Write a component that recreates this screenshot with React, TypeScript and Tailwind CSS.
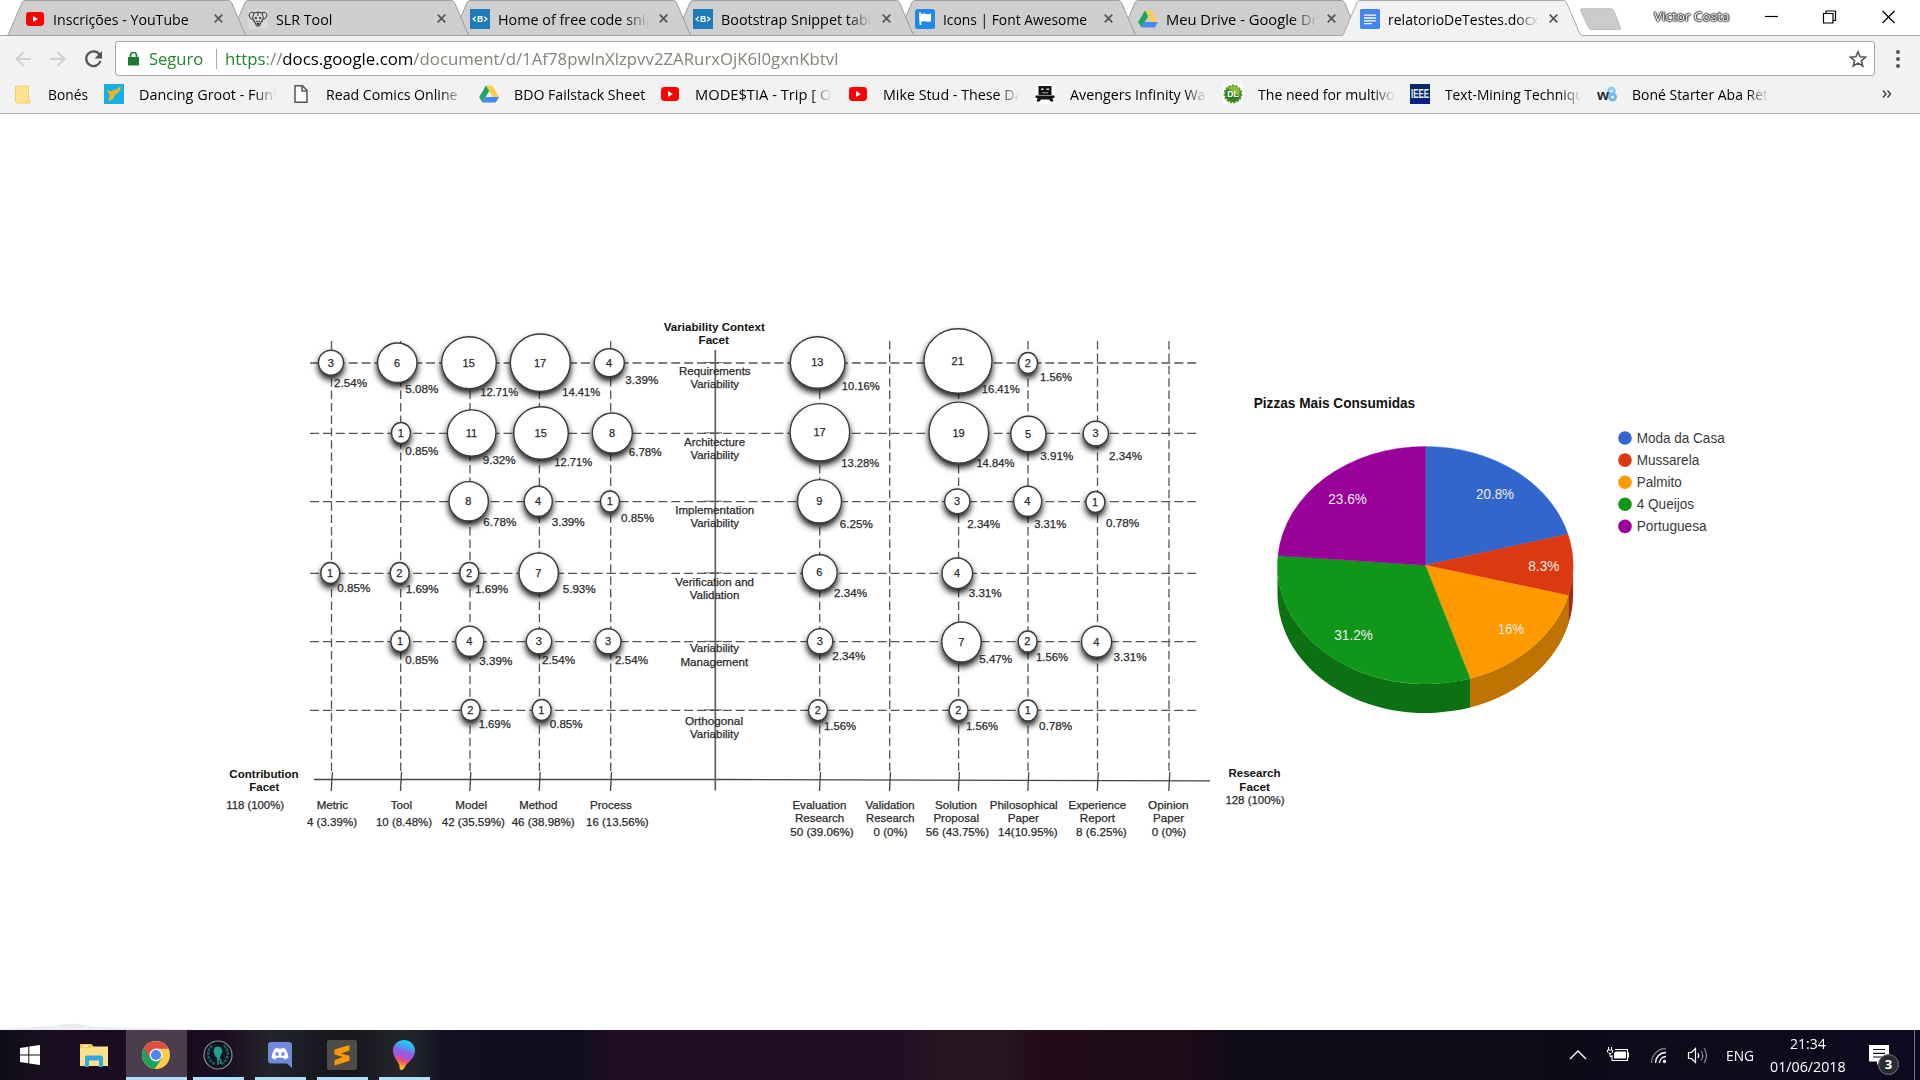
import { useLayoutEffect, useRef, useState, type ReactNode } from "react";

/* Text squeezed horizontally so that it takes exactly `w` pixels. */
function Fit({ w, children, className = "" }: { w: number; children: ReactNode; className?: string }) {
  const ref = useRef<HTMLSpanElement>(null);
  const [scale, setScale] = useState(1);
  useLayoutEffect(() => {
    if (ref.current) setScale(w / ref.current.offsetWidth);
  }, [w]);
  return (
    <span className={`block shrink-0 ${className}`} style={{ width: w }}>
      <span ref={ref} className="inline-block origin-left whitespace-nowrap" style={{ transform: `scaleX(${scale})` }}>
        {children}
      </span>
    </span>
  );
}

/* ---------- small icons ---------- */

const YouTube = () => (
  <svg viewBox="0 0 20 20" className="size-5">
    <rect x="1" y="3" width="18" height="14" rx="3.4" fill="#f00" />
    <path d="M8 7v6l5-3z" fill="#fff" />
  </svg>
);

const Panda = () => (
  <svg viewBox="0 0 20 20" className="size-5" fill="none" stroke="#333" strokeWidth="1">
    <rect width="20" height="20" fill="#d8d8d8" stroke="none" />
    <path d="M6 4 10 3l4 1 1.500 5-2.500 4-1.500 4h-3L7 13 4.500 9z" />
    <path d="M6 4C3 2 .8 4 1.200 7l2 3 1.500.5M14 4c3-2 5.200 0 4.800 3l-2 3-1.500.5" />
    <path d="M10 3v4M7 13 5 12M13 13l2-1M8 12l2 1 2-1" />
    <path d="M8.800 14.500h2.400L10 16zM6.800 9l1.600-.6-.3 1.600zM13.200 9l-1.600-.6.3 1.600z" fill="#222" />
  </svg>
);

const Bootsnipp = () => (
  <svg viewBox="0 0 20 20" className="size-5">
    <rect width="20" height="20" fill="#1f7ab8" />
    <path d="M5.800 7.800 3 10l2.800 2.200M14.200 7.800 17 10l-2.800 2.200" stroke="#fff" strokeWidth="1.200" fill="none" />
    <text x="10" y="13" textAnchor="middle" fontSize="8.500" fontWeight="700" fill="#fff" fontFamily="Liberation Sans, sans-serif">B</text>
  </svg>
);

const FontAwesome = () => (
  <svg viewBox="0 0 20 20" className="size-5">
    <rect width="20" height="20" rx="2.500" fill="#228ae6" />
    <path d="M4 4.300a1.100 1.100 0 0 1 2.200 0V5c2-.9 3.800-.6 5.300 0 1.600.6 2.800.4 4.500-.4v7.600c-1.700.9-3.100 1-4.800.4-1.700-.6-3.200-.7-5 .1V16H4.600z" fill="#fff" />
  </svg>
);

const Drive = () => (
  <svg viewBox="0 0 20 20" className="size-5">
    <path d="M7 1.500h6.200L20 13h-6.300z" fill="#ffcf4a" />
    <path d="M7 1.500 10.200 7 3.500 18.500.2 13z" fill="#1fa463" />
    <path d="M3.500 18.500 6.800 13H20l-3.200 5.500z" fill="#4688f4" />
  </svg>
);

const Docs = () => (
  <svg viewBox="0 0 20 20" className="size-5">
    <rect width="20" height="20" rx="1.500" fill="#4285f4" />
    <path d="M4 6.200h12M4 9h12M4 11.800h12M4 14.600h8" stroke="#fff" strokeWidth="1.300" />
  </svg>
);

const Folder = () => (
  <svg viewBox="0 0 20 20" className="size-5">
    <path d="M2.500 2h13v13l1.500 1.500V19H4l-1.500-1z" fill="#ffe48f" stroke="#f1c65a" strokeWidth=".8" />
    <path d="M14 19v-3.500l1.500-.5 1.500 1.500V19z" fill="#fbd66f" />
  </svg>
);

const Groot = () => (
  <svg viewBox="0 0 20 20" className="size-5">
    <rect width="20" height="20" fill="#19aee8" />
    <path d="M3 6l4 1.500L9.500 6l3.500-.5 2.500-3 1.500 1-1.500 3.500-2.500 2.500-2.500 2-1.500 3.500-3.500 2L4.500 15.500 6 12z" fill="#f3b51f" />
  </svg>
);

const Page = () => (
  <svg viewBox="0 0 20 20" className="size-5">
    <path d="M4 1.800h7.500L16 6.500v11.700H4z" fill="#fff" stroke="#555" strokeWidth="1.500" />
    <path d="M11 2v5h5" fill="none" stroke="#555" strokeWidth="1.500" />
  </svg>
);

const Train = () => (
  <svg viewBox="0 0 20 20" className="size-5">
    <rect width="20" height="20" fill="#fff" />
    <path d="M3.500 2h13v9h-13zM.5 11.500h19v2.500h-2L18.500 17.500h-3L14 15.500H6l-1.500 2h-3L2.500 14h-2z" fill="#151515" />
    <path d="M6 4.500h2.500V6H6zM11.500 4.500H14V6h-2.500zM7 8.500h6v.8H7z" fill="#ddd" />
  </svg>
);

const Badge = () => (
  <svg viewBox="0 0 20 20" className="size-5">
    <rect width="20" height="20" fill="#fff" />
    <circle cx="10" cy="10" r="8.200" fill="#2f7d2a" stroke="#4f8f22" strokeWidth="2.400" strokeDasharray="2.200 1.200" />
    <path d="M4.500 4.500a8 8 0 0 1 12 0v8z" fill="#8dbb35" />
    <text x="10" y="13" textAnchor="middle" fontSize="8.500" fontWeight="700" fill="#fff" fontFamily="Liberation Sans, sans-serif">DL</text>
  </svg>
);

const Ieee = () => (
  <svg viewBox="0 0 20 20" className="size-5">
    <rect width="20" height="20" fill="#0a2b62" />
    <rect y="15" width="20" height="5" fill="#0b1c8e" />
    <text x="1" y="14" textLength="18" lengthAdjust="spacingAndGlyphs" fontSize="12.500" fontWeight="700" fill="#e8eef8" fontFamily="Liberation Sans, sans-serif">IEEE</text>
  </svg>
);

const W8 = () => (
  <svg viewBox="0 0 20 20" className="size-5">
    <circle cx="14.500" cy="7" r="2.800" fill="none" stroke="#8cc8f2" strokeWidth="3" />
    <circle cx="15.500" cy="13" r="3" fill="none" stroke="#70b7ef" strokeWidth="3" />
    <text x="0" y="16" fontSize="14.500" fontWeight="700" fill="#2b2b2b" fontFamily="Liberation Sans, sans-serif" textLength="12" lengthAdjust="spacingAndGlyphs">w</text>
  </svg>
);

/* ---------- tab strip ---------- */

type TabData = { icon: ReactNode; label: string; w: number; z: string; active?: boolean; fade?: boolean };

const tabs: TabData[] = [
  { icon: <YouTube />, label: "Inscrições - YouTube", w: 136, z: "z-[6]" },
  { icon: <Panda />, label: "SLR Tool", w: 56, z: "z-[5]" },
  { icon: <Bootsnipp />, label: "Home of free code snip", w: 156, z: "z-[4]", fade: true },
  { icon: <Bootsnipp />, label: "Bootstrap Snippet table", w: 158, z: "z-[3]", fade: true },
  { icon: <FontAwesome />, label: "Icons | Font Awesome", w: 144, z: "z-[2]" },
  { icon: <Drive />, label: "Meu Drive - Google Dri", w: 155, z: "z-[1]", fade: true },
  { icon: <Docs />, label: "relatorioDeTestes.docx", w: 150.5, z: "z-[7]", active: true, fade: true },
];

const fadeMask = "[mask-image:linear-gradient(to_right,#000_84%,transparent)]";

function Tab({ icon, label, w, z, active, fade }: TabData) {
  return (
    <div className={`relative h-9 w-[222.5px] shrink-0 ${z}`}>
      <svg className="absolute left-0 top-0 overflow-visible" width="240" height="36">
        <path
          d="M0 36 L2 33 L15 2.500 Q16 .5 18 .5 H221.500 Q223.500 .5 224.500 2.500 L237.500 33 L239.500 36"
          fill={active ? "#f2f2f2" : "#cfcfcf"}
          stroke={active ? "#a9a9a9" : "#9d9d9d"}
        />
        {!active && <path d="M0 35.500H240" stroke="#a3a3a3" />}
        {active && <path d="M1 35.700H239" stroke="#f2f2f2" strokeWidth="1.600" />}
      </svg>
      <div className="relative flex h-full items-center pl-[18px] pt-[1px]">
        {icon}
        <div className={`ml-[8px] w-[151px] overflow-hidden text-[15px] leading-6 ${fade ? fadeMask : ""}`}>
          <Fit w={w}>{label}</Fit>
        </div>
        <svg viewBox="0 0 10 10" className="ml-[10px] size-[9px]">
          <path d="M.8.800l8.400 8.400M9.200.8.800 9.200" stroke="#555" strokeWidth="1.900" />
        </svg>
      </div>
    </div>
  );
}

function TabStrip() {
  return (
    <div className="flex h-9 items-start border-b border-[#a9a9a9] bg-white pl-[7px]">
      {tabs.map((t, i) => (
        <Tab key={i} {...t} />
      ))}
      <svg width="44" height="24" className="ml-[14px] mt-[8px] shrink-0">
        <path d="M3 .8h29q2 0 2.800 1.800l6.600 17q.8 2-1.400 2H12.500q-2 0-2.800-1.800L1.800 2.800Q1 .8 3 .8z" fill="#cbcbcb" stroke="#bdbdbd" />
      </svg>
      <div className="ml-[31px] mt-[6px] text-[13px] leading-[20px] text-white [text-shadow:0_0_1px_#000,0_0_1px_#000,0_0_2px_#222,0_0_2px_#333,0_0_2px_#333]">
        <Fit w={75}>Victor Costa</Fit>
      </div>
      <svg width="132" height="36" className="ml-[35px] shrink-0" fill="none" stroke="#000" strokeWidth="1.200">
        <path d="M1 16.500H14" />
        <path d="M59.500 13.500h9.500v9.500h-9.500zM62 13.500V11h9.500v9.500H69" />
        <path d="M118.500 11l12 12M130.500 11l-12 12" />
      </svg>
    </div>
  );
}

/* ---------- toolbar ---------- */

function Toolbar() {
  return (
    <div className="flex h-[42px] items-start bg-[#f2f2f2] pt-[5px]">
      <svg width="115" height="35" className="shrink-0" fill="none" strokeWidth="1.900">
        <path d="M31 18H17M23.500 11 16.500 18l7 7" stroke="#cfcfcf" />
        <path d="M50 18H64M57.500 11l7 7-7 7" stroke="#cfcfcf" />
        <path d="M99.500 13.500a7.300 7.300 0 1 0 1 6.500" stroke="#555" strokeWidth="2.300" />
        <path d="M102 10v7.500h-7.500z" fill="#555" />
      </svg>
      <div className="flex h-[35px] w-[1760px] shrink-0 items-center rounded-[3px] border border-[#a6a6a6] bg-white pl-[12px] text-[17px] leading-[24px]">
        <svg width="11" height="15" className="shrink-0">
          <path d="M0 6h11v8.500H0z" fill="#1b7e2f" />
          <path d="M2.500 6.500V4.500a3 3 0 0 1 6 0v2" fill="none" stroke="#1b7e2f" strokeWidth="1.700" />
        </svg>
        <Fit w={54.5} className="ml-[10px] text-[#23832f]">Seguro</Fit>
        <div className="ml-[12px] h-[20px] w-px bg-[#aaa]" />
        <Fit w={613.5} className="ml-[8px] text-[#84847c]">
          <span className="text-[#23832f]">https</span>://<span className="text-black">docs.google.com</span>
          /document/d/1Af78pwlnXlzpvv2ZARurxOjK6l0gxnKbtvl
        </Fit>
        <svg viewBox="0 0 18 18" className="ml-auto mr-[7px] size-[18px]">
          <path d="M9 1.800l2.100 5 5.400.4-4.100 3.500 1.300 5.300L9 13.100 4.300 16l1.300-5.300L1.500 7.200l5.400-.4z" fill="none" stroke="#555" strokeWidth="1.600" />
        </svg>
      </div>
      <svg width="44" height="35" fill="#555">
        <circle cx="23" cy="11" r="2" />
        <circle cx="23" cy="18" r="2" />
        <circle cx="23" cy="25" r="2" />
      </svg>
    </div>
  );
}

const bookmarks: { icon: ReactNode; label: string; w: number; fade?: boolean; box: string }[] = [
  { icon: <Groot />, label: "Dancing Groot - Funk", w: 142, fade: true, box: "w-[187px]" },
  { icon: <Page />, label: "Read Comics Online", w: 132, fade: true, box: "w-[188px]" },
  { icon: <Drive />, label: "BDO Failstack Sheet", w: 131, box: "w-[181px]" },
  { icon: <YouTube />, label: "MODE$TIA - Trip [ Of", w: 141, fade: true, box: "w-[188px]" },
  { icon: <YouTube />, label: "Mike Stud - These Da", w: 140, fade: true, box: "w-[187px]" },
  { icon: <Train />, label: "Avengers Infinity Wa", w: 136, fade: true, box: "w-[187.500px]" },
  { icon: <Badge />, label: "The need for multivo", w: 137, fade: true, box: "w-[187px]" },
  { icon: <Ieee />, label: "Text-Mining Techniqu", w: 139, fade: true, box: "w-[187.500px]" },
  { icon: <W8 />, label: "Boné Starter Aba Ret", w: 136, fade: true, box: "w-[188px]" },
];

function BookmarkBar() {
  return (
    <div className="flex h-[36px] items-center border-b border-[#b4b4b4] bg-[#f2f2f2] pb-[3px] pl-[13px] text-[15px] leading-6">
      <div className="flex w-[91px] shrink-0 items-center">
        <Folder />
        <Fit w={39.5} className="ml-[14.500px]">Bonés</Fit>
      </div>
      {bookmarks.map((b, i) => (
        <div key={i} className={`flex shrink-0 items-center ${b.box}`}>
          {b.icon}
          <div className={`ml-[15px] w-[137px] shrink-0 overflow-hidden ${b.fade ? fadeMask : ""}`}>
            <Fit w={b.w}>{b.label}</Fit>
          </div>
        </div>
      ))}
      <svg width="10" height="10" className="ml-[96.500px]" fill="none" stroke="#444" strokeWidth="1.500">
        <path d="M1 1.500 4 5 1 8.500M5.500 1.500l3 3.500-3 3.500" />
      </svg>
    </div>
  );
}

/* ---------- bubble chart ---------- */

/* cx, cy, rx, ry, count, label x, label baseline, share, label width */
type Bubble = [number, number, number, number, number, number, number, string, number];

const bubbles: Bubble[] = [
  [331, 362.7, 12.5, 12.5, 3, 334, 388, "2.54%", 33],
  [397.3, 362.7, 19.7, 19.7, 6, 405.3, 394, "5.08%", 33],
  [469, 362.7, 27.3, 26, 15, 480.3, 396.7, "12.71%", 38],
  [540.3, 362.7, 30, 28.7, 17, 562.3, 396.7, "14.41%", 38],
  [609.3, 362.7, 15, 14, 4, 625.3, 384.7, "3.39%", 33],
  [401, 433, 9.5, 10.5, 1, 405.3, 456, "0.85%", 33],
  [471.7, 433, 24.3, 23.1, 11, 482.7, 464.7, "9.32%", 33],
  [541, 433, 27.3, 26.2, 15, 554.3, 467, "12.71%", 38],
  [612.3, 433, 20, 20, 8, 628.7, 456.7, "6.78%", 33],
  [468.7, 501.3, 19.7, 19.7, 8, 483.3, 526.7, "6.78%", 33],
  [538.3, 501.3, 14, 15, 4, 551.7, 526.7, "3.39%", 33],
  [610, 501.5, 9.5, 10.5, 1, 621, 522.3, "0.85%", 33],
  [330.3, 573, 9.5, 10.5, 1, 337.3, 592.7, "0.85%", 33],
  [399.7, 573, 9.5, 10.5, 2, 405.7, 593.7, "1.69%", 33],
  [469.3, 573, 9.5, 10.5, 2, 475, 593.7, "1.69%", 33],
  [538.7, 573, 19.7, 20, 7, 562.7, 593.7, "5.93%", 33],
  [400.3, 641.3, 9.5, 10.5, 1, 405.3, 664.3, "0.85%", 33],
  [469.7, 641.3, 14, 15, 4, 479.3, 665.3, "3.39%", 33],
  [539, 641.3, 12.7, 12.5, 3, 542, 664.3, "2.54%", 33],
  [608.3, 641.3, 12.7, 12.5, 3, 615, 664.3, "2.54%", 33],
  [470.7, 710, 9.5, 10.5, 2, 478.7, 728.3, "1.69%", 32],
  [541.7, 710, 9.5, 10.5, 1, 549.7, 728.3, "0.85%", 33],
  [817.6, 362.5, 27.3, 25.8, 13, 841.7, 391, "10.16%", 38],
  [958, 361, 34, 32.3, 21, 981.8, 394, "16.41%", 38],
  [1028, 363, 9.5, 10.5, 2, 1040, 382, "1.56%", 32],
  [819.9, 432.3, 29.8, 28.7, 17, 841.3, 467.3, "13.28%", 38],
  [958.8, 432.6, 29.8, 30.5, 19, 976.4, 468, "14.84%", 38],
  [1028.4, 434, 17.6, 17.7, 5, 1040.3, 460.3, "3.91%", 33],
  [1095.8, 433.5, 12.6, 12.3, 3, 1109, 460.3, "2.34%", 33],
  [819.5, 501.3, 22, 21.7, 9, 839.8, 528.7, "6.25%", 33],
  [957.3, 501.3, 12.6, 12.3, 3, 967.2, 528.7, "2.34%", 33],
  [1027.7, 501.3, 14, 15, 4, 1034.2, 528.7, "3.31%", 32],
  [1095.4, 502, 9.5, 10.5, 1, 1106, 528, "0.78%", 33],
  [819.7, 572.5, 17.5, 17.7, 6, 834, 597.3, "2.34%", 33],
  [957.3, 573.3, 15.3, 15.3, 4, 968.7, 597.3, "3.31%", 33],
  [820.1, 641.3, 12.7, 12.5, 3, 832.3, 661, "2.34%", 33],
  [961.5, 642, 19.7, 20, 7, 979.2, 663.7, "5.47%", 33],
  [1027.6, 641.5, 9.5, 10.5, 2, 1036, 662, "1.56%", 32],
  [1096.6, 641.7, 15, 15.5, 4, 1113.5, 662, "3.31%", 33],
  [818, 710.3, 9.5, 10.5, 2, 824, 731, "1.56%", 32],
  [958.6, 710.3, 9.5, 10.5, 2, 966, 731, "1.56%", 32],
  [1028, 710.5, 9.5, 10.5, 1, 1039, 731, "0.78%", 33],
];

/* text, left x, right x, baseline */
type Label = [string, number, number, number];

const boldLabels: Label[] = [
  ["Variability Context", 663.7, 764.8, 330.7],
  ["Facet", 698.5, 729, 344],
  ["Contribution", 229.3, 298.7, 778.3],
  ["Facet", 249.3, 279.3, 791.3],
  ["Research", 1228.4, 1280.5, 777.3],
  ["Facet", 1239.3, 1269.8, 791],
];

const labels: Label[] = [
  ["Requirements", 679, 750.6, 375.4],
  ["Variability", 690.5, 739, 388.3],
  ["Architecture", 684, 745, 446],
  ["Variability", 690.5, 739, 459.3],
  ["Implementation", 675.2, 754.3, 513.7],
  ["Variability", 690.5, 739, 526.7],
  ["Verification and", 675.3, 754, 585.5],
  ["Validation", 689.7, 739.3, 598.5],
  ["Variability", 690, 739, 652],
  ["Management", 680.4, 748.2, 665.7],
  ["Orthogonal", 685, 743, 725],
  ["Variability", 690, 739, 738],
  ["118 (100%)", 226.3, 284, 809],
  ["Metric", 316.7, 348, 809],
  ["4 (3.39%)", 307, 357, 826.3],
  ["Tool", 390.7, 412, 809],
  ["10 (8.48%)", 376, 432, 826.3],
  ["Model", 455.3, 487, 809],
  ["42 (35.59%)", 441.7, 505, 826.3],
  ["Method", 519.3, 557.3, 809],
  ["46 (38.98%)", 511.7, 574.7, 826.3],
  ["Process", 590, 631.7, 809],
  ["16 (13.56%)", 586, 648.7, 826.3],
  ["Evaluation", 792.4, 846.4, 809],
  ["Research", 794.9, 844.3, 822],
  ["50 (39.06%)", 790.3, 853.6, 836],
  ["Validation", 865.6, 914.6, 809],
  ["Research", 866, 914.6, 822],
  ["0 (0%)", 873.6, 907.5, 836],
  ["Solution", 935, 976.9, 809],
  ["Proposal", 933.4, 979, 822],
  ["56 (43.75%)", 925.8, 989, 836],
  ["Philosophical", 989.7, 1057.7, 809],
  ["Paper", 1007.8, 1038.8, 822],
  ["14(10.95%)", 998, 1057.7, 836],
  ["Experience", 1068.5, 1126.2, 809],
  ["Report", 1079.8, 1114.9, 822],
  ["8 (6.25%)", 1076, 1126.7, 836],
  ["Opinion", 1148, 1188.6, 809],
  ["Paper", 1153, 1184, 822],
  ["0 (0%)", 1151.8, 1186.2, 836],
  ["128 (100%)", 1225.4, 1284.6, 804.3],
];

const columns = [331.5, 400.7, 470, 539.4, 610.7, 819.7, 889.7, 958.6, 1028, 1097.5, 1169];
const rows = [363, 433.3, 501.6, 573.3, 641.7, 710.3];

function BubbleChart() {
  return (
    <svg width="1020" height="540" viewBox="220 310 1020 540" className="shrink-0 overflow-visible" fontFamily="Liberation Sans, Arial, sans-serif">
      <defs>
        <filter id="bubble-shadow" x="-50%" y="-50%" width="200%" height="220%">
          <feDropShadow dx="0" dy="4" stdDeviation="3" floodColor="#000" floodOpacity=".9" />
        </filter>
      </defs>
      <g stroke="#555" strokeWidth="1.300">
        {rows.map((y) => (
          <path key={y} d={`M310 ${y}H1198`} strokeDasharray="9 3.900" />
        ))}
        {columns.map((x) => (
          <path key={x} d={`M${x} 341V771`} strokeDasharray="8.500 3.900" />
        ))}
        {rows.map((y) => (
          <path key={`s${y}`} d={`M704 ${y - 0.4}H722`} strokeWidth="1" />
        ))}
      </g>
      <g stroke="#444" strokeWidth="1.300" fill="none">
        <path d="M314 779.500H720L1210 780.800" />
        <path d="M715.300 350V790.500" stroke="#666" strokeWidth="1.800" />
        {columns.map((x) => (
          <path key={x} d={`M${x + 0.8} 772L${x - 0.2} 791`} />
        ))}
      </g>
      {bubbles.map(([cx, cy, rx, ry], i) => (
        <ellipse key={i} cx={cx} cy={cy} rx={rx} ry={ry} fill="#fff" stroke="#3a3a3a" strokeWidth="1.400" filter="url(#bubble-shadow)" />
      ))}
      <g fontSize="11" fill="#2a2a2a" stroke="#2a2a2a" strokeWidth=".25">
        {bubbles.map(([cx, cy, , , n, lx, ly, share, w], i) => (
          <g key={i}>
            <text x={cx - 0.3} y={cy + 3.9} textAnchor="middle">{n}</text>
            <text x={lx} y={ly - 0.6} textLength={w} lengthAdjust="spacingAndGlyphs">{share}</text>
          </g>
        ))}
        {labels.map(([t, x1, x2, y], i) => (
          <text key={i} x={x1} y={y} textLength={x2 - x1} lengthAdjust="spacingAndGlyphs" fontSize="11.500">{t}</text>
        ))}
      </g>
      <g fontSize="11.500" fontWeight="700" fill="#111">
        {boldLabels.map(([t, x1, x2, y], i) => (
          <text key={i} x={x1} y={y} textLength={x2 - x1} lengthAdjust="spacingAndGlyphs">{t}</text>
        ))}
      </g>
    </svg>
  );
}

/* ---------- pie chart ---------- */

const CX = 1425.3;
const CY = 565.2;
const RX = 147.8;
const RY = 118.8;
const DEPTH = 29;

const point = (pct: number) => {
  const a = (pct / 100) * Math.PI * 2;
  return [CX + RX * Math.sin(a), CY - RY * Math.cos(a)];
};

const slice = (from: number, to: number) => {
  const [x1, y1] = point(from);
  const [x2, y2] = point(to);
  return `M${CX} ${CY}L${x1} ${y1}A${RX} ${RY} 0 0 1 ${x2} ${y2}Z`;
};

const side = (from: number, to: number) => {
  const [x1, y1] = point(from);
  const [x2, y2] = point(to);
  return `M${x1} ${y1}A${RX} ${RY} 0 0 1 ${x2} ${y2}V${y2 + DEPTH}A${RX} ${RY} 0 0 0 ${x1} ${y1 + DEPTH}Z`;
};

const slices = [
  { name: "Moda da Casa", color: "#3366cc", from: 0, to: 20.8, share: "20.8%", x: 1476, y: 498.5, w: 38, lw: 88 },
  { name: "Mussarela", color: "#dc3912", from: 20.8, to: 29.1, share: "8.3%", x: 1528.3, y: 570.7, w: 31, lw: 62.5 },
  { name: "Palmito", color: "#ff9900", from: 29.1, to: 45.1, share: "16%", x: 1498, y: 633.5, w: 26, lw: 45 },
  { name: "4 Queijos", color: "#109618", from: 45.1, to: 76.3, share: "31.2%", x: 1334.3, y: 640.3, w: 38.5, lw: 57.5 },
  { name: "Portuguesa", color: "#990099", from: 76.3, to: 100, share: "23.6%", x: 1328.3, y: 504, w: 38.5, lw: 70 },
];

function PieChart() {
  return (
    <svg width="500" height="350" viewBox="1240 380 500 350" className="mt-[70px] shrink-0" fontFamily="Liberation Sans, Arial, sans-serif">
      <text x="1253.700" y="407.700" fontSize="14" fontWeight="700" fill="#111" textLength="161.500" lengthAdjust="spacingAndGlyphs">Pizzas Mais Consumidas</text>
      <path d={side(25, 29.1)} fill="#a52b0e" />
      <path d={side(29.1, 45.1)} fill="#bf7300" />
      <path d={side(45.1, 75)} fill="#0c7112" />
      {slices.map((s) => (
        <path key={s.name} d={slice(s.from, s.to)} fill={s.color} stroke={s.color} strokeWidth=".4" />
      ))}
      {slices.map((s, i) => (
        <g key={s.name} fontSize="14">
          <text x={s.x} y={s.y} fill="#eee" textLength={s.w} lengthAdjust="spacingAndGlyphs">{s.share}</text>
          <circle cx="1625" cy={438 + i * 22.1} r="6.800" fill={s.color} />
          <text x="1636.700" y={443 + i * 22.1} fill="#3a3a3a" textLength={s.lw} lengthAdjust="spacingAndGlyphs">{s.name}</text>
        </g>
      ))}
    </svg>
  );
}

/* ---------- taskbar ---------- */

function Windows() {
  return (
    <svg width="20" height="20" fill="#fff">
      <path d="M0 3l8.300-1.200v7.700H0zM9.300 1.600 20 0v9.500H9.300zM0 10.500h8.300v7.700L0 17zM9.300 10.500H20V20L9.300 18.400z" />
    </svg>
  );
}

function Explorer() {
  return (
    <svg width="28" height="24">
      <path d="M0 1h11l2.500 2.500H28V23H0z" fill="#ffe08a" />
      <path d="M0 1h11l2.500 2.500L11.500 5H0z" fill="#f7c64b" />
      <path d="M3 2.500h5v1.500H3z" fill="#fff" />
      <path d="M5 24V14.500q0-2 2-2h14q2 0 2 2V24h-4v-6.500H9V24z" fill="#2fa8e6" />
    </svg>
  );
}

function Chrome() {
  return (
    <svg viewBox="0 0 28 28" width="28" height="28" className="mr-[1.500px]">
      <circle cx="14" cy="14" r="14" fill="#ffcd46" />
      <path d="M14 14 1.900 7A14 14 0 0 0 12.500 27.900L20 17.500z" fill="#1fa15d" />
      <path d="M14 14 8 17.500 1.900 7A14 14 0 0 1 26.300 7.700H14z" fill="#dd4f43" />
      <circle cx="14" cy="14" r="6.500" fill="#f1f1f1" />
      <circle cx="14" cy="14" r="5.100" fill="#4b88ee" />
    </svg>
  );
}

function Kraken() {
  return (
    <svg viewBox="0 0 30 30" width="30" height="30" className="mr-[1px]">
      <circle cx="15" cy="15" r="14" fill="#0b141b" stroke="#8b8f92" strokeWidth="1.200" />
      <path d="M9 5.500a11 11 0 0 0 3 18.500M21 5.500a11 11 0 0 1-3 18.500" fill="none" stroke="#24566a" strokeWidth="2.400" strokeDasharray="3 .8" />
      <path d="M15 6.500c3.300 0 4.500 3 4.300 5.500-.2 2-1.800 3-2.300 4.500V19h1.300v5h-1.500v-4h-1v4.800h-1.600V17.500h-1.400c-.5-1.500-1.900-3.500-2.100-5.500-.2-2.500 1-5.500 4.300-5.500z" fill="#20a090" />
    </svg>
  );
}

function Discord() {
  return (
    <svg viewBox="0 0 24 26" width="24" height="26">
      <path d="M3 0h18q3 0 3 3v23l-5-4.500H3q-3 0-3-3V3q0-3 3-3z" fill="#7289da" />
      <path d="M6.500 7Q8 6 10 5.800l.5.900h3l.5-.9q2 .2 3.500 1.200Q20 11 20.500 15.500q-1.500 1.500-4 2l-1-1.700h-7l-1 1.700q-2.500-.5-4-2Q4 11 6.500 7z" fill="#fff" />
      <ellipse cx="9" cy="12" rx="1.700" ry="1.900" fill="#7289da" />
      <ellipse cx="15" cy="12" rx="1.700" ry="1.900" fill="#7289da" />
    </svg>
  );
}

function Sublime() {
  return (
    <svg viewBox="0 0 30 30" width="30" height="30">
      <rect width="30" height="30" rx="2" fill="#4d4c49" />
      <path d="M22.500 5v5.500l-8.500 3 8.500 2.300v5L7.500 25.500V20l8.500-3-8.500-2.500V9.500z" fill="#ff9800" />
    </svg>
  );
}

function Paint3D() {
  return (
    <svg viewBox="0 0 22 30" width="22" height="30">
      <defs>
        <linearGradient id="paint" x1=".6" y1="0" x2=".35" y2="1">
          <stop offset="0" stopColor="#25d3f5" />
          <stop offset=".2" stopColor="#35aef2" />
          <stop offset=".38" stopColor="#8a63ea" />
          <stop offset=".55" stopColor="#a554dc" />
          <stop offset=".7" stopColor="#ef4f6c" />
          <stop offset=".84" stopColor="#fb9a25" />
          <stop offset="1" stopColor="#ffc928" />
        </linearGradient>
      </defs>
      <path d="M11 0c6 0 11 4.500 11 10.500 0 7-5.500 11-8.500 14-1.500 1.500-2 5-5 5.500-1.500 0-2-1.500-2-3.500C6.500 22 0 18 0 10.500 0 4.500 5 0 11 0z" fill="url(#paint)" />
    </svg>
  );
}

const apps: { icon: ReactNode; box: string; bar: string }[] = [
  { icon: <Chrome />, box: "w-[61px] bg-[#4b3d4d]", bar: "w-[61px]" },
  { icon: <Kraken />, box: "w-[62px]", bar: "w-[51px]" },
  { icon: <Discord />, box: "w-[62px]", bar: "w-[51px]" },
  { icon: <Sublime />, box: "w-[62px]", bar: "w-[51px]" },
  { icon: <Paint3D />, box: "w-[62px]", bar: "w-[51px]" },
];

function Tray() {
  return (
    <div className="ml-auto flex h-full items-center text-white">
      <svg width="160" height="50" fill="none" stroke="#fff" strokeWidth="1.400">
        <path d="M9 29l8-8 8 8" />
        <path d="M54.500 21.500h10.500v7H53v-5.500z" fill="#fff" stroke="none" />
        <path d="M51 25v5.500h15.500V19.500H54M67.500 22.500v5" strokeWidth="1.100" />
        <path d="M47.500 17v3M50.500 17v3M46.500 20h5v2l-1.500 1.500h-2L46.500 22zM49 23.500v3h2" strokeWidth="1" />
        <g strokeWidth="1.300">
          <path d="M90.500 33a14.500 14.500 0 0 1 14.500-14.500" stroke="#77757e" />
          <path d="M94.500 33a10.500 10.500 0 0 1 10.500-10.500M98.500 33a6.500 6.500 0 0 1 6.500-6.500" />
          <circle cx="103.500" cy="31.500" r="1.700" fill="#fff" stroke="none" />
        </g>
        <path d="M127.500 22.500h3l4-4v14l-4-4h-3z" strokeWidth="1.200" />
        <path d="M137 23q1.500 2.500 0 5" strokeWidth="1.200" />
        <path d="M140 20.500q3.500 5 0 10M143 18q5 7.500 0 15" stroke="#85838c" strokeWidth="1.200" />
      </svg>
      <Fit w={28.5} className="ml-[5px] text-[15px]">ENG</Fit>
      <div className="ml-[16px] flex w-[76px] flex-col items-center text-[15px] leading-[23px]">
        <Fit w={35.5}>21:34</Fit>
        <Fit w={76}>01/06/2018</Fit>
      </div>
      <div className="relative ml-[23px] mr-[25px] h-[50px] w-[20px]">
        <svg width="20" height="50" className="absolute left-0 top-0">
          <path d="M0 15h20v16.500h-9l-3 3.500v-3.500H0z" fill="#fff" />
          <path d="M4 19.500h12M4 23.300h12M4 27h12" stroke="#0d0b1c" strokeWidth="1.200" />
        </svg>
        <span className="absolute left-[9px] top-[24px] flex size-[21px] items-center justify-center rounded-full border border-[#777] bg-[#2b2c33] text-[13px] font-bold">3</span>
      </div>
      <div className="h-full w-px bg-[#77767f]" />
      <div className="w-[5px]" />
    </div>
  );
}

function Taskbar() {
  return (
    <div className="flex h-[50px] shrink-0 items-center bg-[linear-gradient(90deg,#0e0c19_0,#170f1f_40px,#1b0c20_70px,#170d1f_180px,#1c0d20_225px,#22252b_270px,#1a1b23_310px,#15151c_345px,#22262b_400px,#20242a_415px,#110f20_445px,#110e22_580px,#220c22_615px,#220c22_900px,#271622_940px,#271622_1000px,#210b18_1040px,#1e0b18_1190px,#0f0c18_1235px,#0d0b18_1560px,#0e0a20_1920px)]">
      <div className="w-[20px]" />
      <Windows />
      <div className="w-[40px]" />
      <Explorer />
      <div className="w-[18px]" />
      {apps.map((a, i) => (
        <div key={i} className={`flex h-full flex-col items-center ${a.box}`}>
          <div className="flex flex-1 items-center pt-[2px]">{a.icon}</div>
          <div className={`h-[3px] bg-[#aee0fb] ${a.bar}`} />
        </div>
      ))}
      <Tray />
    </div>
  );
}

export default function App() {
  return (
    <div className="flex h-[1080px] w-[1920px] flex-col overflow-hidden bg-white font-['Open_Sans','Noto_Sans',sans-serif] text-black">
      <TabStrip />
      <Toolbar />
      <BookmarkBar />
      <main className="flex flex-1 items-start pl-[220px] pt-[196px]">
        <BubbleChart />
        <PieChart />
      </main>
      <svg width="192" height="7" className="shrink-0">
        <path d="M0 7V5.500l20-.5 15-1 18-1 8-1.500L76 .5 84 2l10 2 20 .5 40 1 38 .5v1z" fill="#ededed" />
      </svg>
      <Taskbar />
    </div>
  );
}
